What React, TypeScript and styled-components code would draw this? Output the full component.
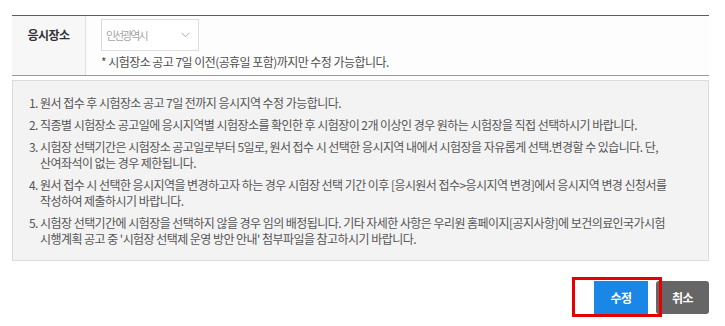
import { createGlobalStyle } from "styled-components";
import styled from "styled-components";

const GlobalStyle = createGlobalStyle`
  body {
    margin: 0;
    background: #fff;
    font-family: "Noto Sans CJK KR", "Noto Sans", sans-serif;
    color: #555;
  }
`;

const notices: string[][] = [
	["1. 원서 접수 후 시험장소 공고 7일 전까지 응시지역 수정 가능합니다."],
	[
		"2. 직종별 시험장소 공고일에 응시지역별 시험장소를 확인한 후 시험장이 2개 이상인 경우 원하는 시험장을 직접 선택하시기 바랍니다.",
	],
	[
		"3. 시험장 선택기간은 시험장소 공고일로부터 5일로, 원서 접수 시 선택한 응시지역 내에서 시험장을 자유롭게 선택.변경할 수 있습니다. 단,",
		"산여좌석이 없는 경우 제한됩니다.",
	],
	[
		"4. 원서 접수 시 선택한 응시지역을 변경하고자 하는 경우 시험장 선택 기간 이후 [응시원서 접수>응시지역 변경]에서 응시지역 변경 신청서를",
		"작성하여 제출하시기 바랍니다.",
	],
	[
		"5. 시험장 선택기간에 시험장을 선택하지 않을 경우 임의 배정됩니다. 기타 자세한 사항은 우리원 홈페이지[공지사항]에 보건의료인국가시험",
		"시행계획 공고 중 '시험장 선택제 운영 방안 안내' 첨부파일을 참고하시기 바랍니다.",
	],
];

const Chevron = () => (
	<svg width="9" height="6" viewBox="0 0 9 6" fill="none">
		<polyline points="0.5,0.8 4.5,4.8 8.5,0.8" stroke="#aaa" strokeWidth="1" />
	</svg>
);

export default function App() {
	return (
		<>
			<GlobalStyle />
			<Page>
				<FormTable>
					<LabelCell>응시장소</LabelCell>
					<ValueCell>
						<Select>
							<SelectText>인선광역시</SelectText>
							<Chevron />
						</Select>
						<Note>* 시험장소 공고 7일 이전(공휴일 포함)까지만 수정 가능합니다.</Note>
					</ValueCell>
				</FormTable>

				<InfoBox>
					{notices.map((lines) => (
						<InfoItem key={lines[0]}>
							{lines.map((line, i) => (
								<InfoLine key={line} $indent={i > 0}>
									{line}
								</InfoLine>
							))}
						</InfoItem>
					))}
				</InfoBox>

				<ButtonRow>
					<Highlight>
						<Button $tone="primary">수정</Button>
					</Highlight>
					<Button $tone="cancel">취소</Button>
				</ButtonRow>
			</Page>
		</>
	);
}

const Page = styled.div`
  width: 725px;
  min-height: 326px;
  box-sizing: border-box;
  padding: 15px 16px 12px 12px;
`;

const FormTable = styled.div`
  display: flex;
  height: 61px;
  box-sizing: border-box;
  border-top: 1px solid #5c5c5c;
  border-bottom: 1px solid #9a9a9a;
  background: #fdfdfd;
`;

const LabelCell = styled.div`
  width: 74px;
  flex-shrink: 0;
  box-sizing: border-box;
  padding-top: 3px;
  background: #f7f7f7;
  border-right: 1px solid #e2e2e2;
  text-align: center;
  line-height: 32px;
  font-size: 12px;
  font-weight: 700;
  letter-spacing: -0.5px;
  color: #333;
`;

const ValueCell = styled.div`
  flex: 1;
  padding: 3px 0 0 15px;
`;

const Select = styled.div`
  width: 98px;
  height: 32px;
  box-sizing: border-box;
  border: 1px solid #ddd;
  background: #fff;
  display: flex;
  align-items: center;
  justify-content: space-between;
  padding: 0 8px 0 4px;
`;

const SelectText = styled.span`
  font-size: 11px;
  letter-spacing: -2px;
  color: #a5a5a5;
`;

const Note = styled.div`
  margin-top: 3px;
  font-size: 12px;
  line-height: 16px;
  letter-spacing: -0.55px;
  color: #4f4f4f;
`;

const InfoBox = styled.ol`
  list-style: none;
  margin: 4px 0 0;
  height: 181px;
  box-sizing: border-box;
  padding: 14px 16px 12px 16px;
  background: #f3f3f3;
  border: 1px solid #dcdcdc;
  display: flex;
  flex-direction: column;
  gap: 6px;
`;

const InfoItem = styled.li`
  font-size: 12px;
  line-height: 16px;
  letter-spacing: -0.55px;
  color: #555;
`;

const InfoLine = styled.div<{ $indent: boolean }>`
  white-space: nowrap;
  padding-left: ${({ $indent }) => ($indent ? "11px" : "0")};
`;

const ButtonRow = styled.div`
  display: flex;
  justify-content: flex-end;
  gap: 8px;
  margin-top: 20px;
`;

const Highlight = styled.div`
  position: relative;

  &::after {
    content: "";
    position: absolute;
    left: -22px;
    top: -4px;
    width: 90px;
    height: 40px;
    box-sizing: border-box;
    border: 3px solid #e60000;
    pointer-events: none;
  }
`;

const Button = styled.button<{ $tone: "primary" | "cancel" }>`
  display: block;
  height: 33px;
  width: ${({ $tone }) => ($tone === "primary" ? "54px" : "53px")};
  border: 0;
  border-radius: ${({ $tone }) => ($tone === "primary" ? "0" : "3px")};
  background: ${({ $tone }) => ($tone === "primary" ? "#1a87e6" : "#666")};
  color: #fff;
  font-family: inherit;
  font-size: 12px;
  font-weight: 700;
  letter-spacing: -0.5px;
  padding: 0;
  cursor: pointer;
`;
